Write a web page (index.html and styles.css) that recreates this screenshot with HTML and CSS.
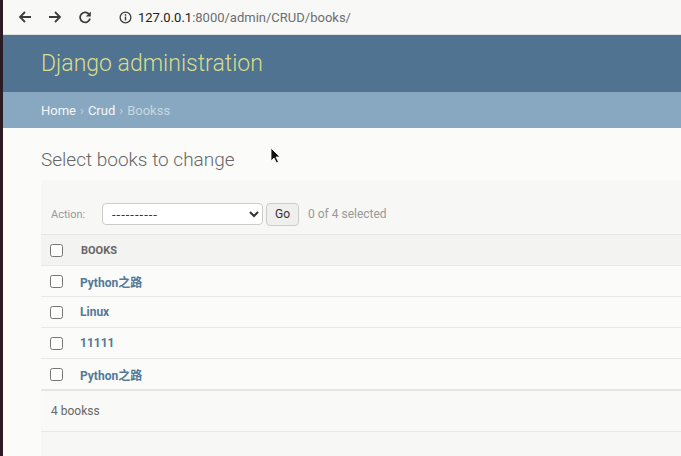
FILE: index.html
```html
<!DOCTYPE html>
<html>
    <head>
        <meta charset="utf-8">
        <title>Select books to change | Django site admin</title>
        <link rel="stylesheet" href="styles.css">
    </head>
    <body>
        <div class="desk"></div>
        <div class="window">
            <div class="toolbar">
                <svg class="nav" width="14" height="14" viewBox="0 0 14 14"><path d="M13 7H2M7 2L2 7l5 5" fill="none" stroke="#3c3c3c" stroke-width="1.8"/></svg>
                <svg class="nav" width="14" height="14" viewBox="0 0 14 14"><path d="M1 7h11M7 2l5 5-5 5" fill="none" stroke="#3c3c3c" stroke-width="1.8"/></svg>
                <svg class="nav" width="14" height="14" viewBox="0 0 14 14"><path d="M11.5 5A5 5 0 1 0 12 8.5" fill="none" stroke="#3c3c3c" stroke-width="1.8"/><path d="M12.8 1.5v5h-5z" fill="#3c3c3c"/></svg>
                <div class="url">
                    <svg width="13" height="13" viewBox="0 0 14 14"><circle cx="7" cy="7" r="5.8" fill="none" stroke="#3c3c3c" stroke-width="1.4"/><path d="M7 6v4.2" stroke="#3c3c3c" stroke-width="1.5"/><circle cx="7" cy="4.2" r="0.9" fill="#3c3c3c"/></svg>
                    <span class="host">127.0.0.1</span><span class="path">:8000/admin/CRUD/books/</span>
                </div>
            </div>
            <div class="header">Django administration</div>
            <div class="breadcrumbs"><a href="#">Home</a> <span class="sep">›</span> <a href="#">Crud</a> <span class="sep">›</span> <span class="sep">Bookss</span></div>
            <div class="content">
                <h1>Select books to change</h1>
                <div class="changelist">
                    <div class="actions">
                        <label>Action:</label>
                        <select><option>----------</option></select>
                        <button>Go</button>
                        <span class="counter">0 of 4 selected</span>
                    </div>
                    <div class="row head"><input type="checkbox"><span>BOOKS</span></div>
                    <div class="row"><input type="checkbox"><a href="#">Python之路</a></div>
                    <div class="row"><input type="checkbox"><a href="#">Linux</a></div>
                    <div class="row"><input type="checkbox"><a href="#">11111</a></div>
                    <div class="row"><input type="checkbox"><a href="#">Python之路</a></div>
                    <p class="paginator">4 bookss</p>
                </div>
            </div>
        </div>
        <svg class="cursor" width="12" height="18" viewBox="0 0 12 18"><path d="M1 1v13l3-3 2.5 5 2-1-2.5-5h4z" fill="#111" stroke="#fff" stroke-width="0.8"/></svg>
    </body>
</html>
```
FILE: styles.css
```css
html, body {
    margin: 0;
    height: 100%;
}
body {
    display: flex;
    font-family: Roboto, "Noto Sans CJK SC", sans-serif;
    background: #fbfbf9;
    overflow: hidden;
}
.desk {
    width: 3px;
    background: #2b1b24;
}
.window {
    flex: 1;
    display: flex;
    flex-direction: column;
}
.toolbar {
    height: 34px;
    border-bottom: 1px solid #e2e2e0;
    background: #f8f8f6;
    display: flex;
    align-items: center;
    padding-left: 15px;
    gap: 16px;
}
.nav {
    display: block;
}
.url {
    display: flex;
    align-items: center;
    gap: 6px;
    margin-left: 11px;
    font-size: 13px;
}
.host {
    color: #202124;
}
.path {
    color: #6b6e72;
    margin-left: -6px;
}
.header {
    height: 57px;
    background: #4f7390;
    color: #d8dc8c;
    font-size: 23px;
    font-weight: 300;
    padding-left: 38px;
    display: flex;
    align-items: center;
}
.breadcrumbs {
    height: 36px;
    background: #87a8c0;
    padding-left: 38px;
    display: flex;
    align-items: center;
    gap: 4px;
    font-size: 13px;
    color: #c9d9e5;
}
.breadcrumbs a {
    color: #f4f7fa;
    text-decoration: none;
}
.breadcrumbs .sep {
    color: #c6d7e3;
}
.content {
    flex: 1;
    padding-left: 38px;
    display: flex;
    flex-direction: column;
}
h1 {
    margin: 20px 0 9px;
    font-size: 19px;
    font-weight: 300;
    color: #666;
}
.changelist {
    flex: 1;
    background: #f7f7f5;
    font-size: 11px;
}
.actions {
    height: 40px;
    margin-top: 14px;
    padding-left: 10px;
    display: flex;
    align-items: center;
    color: #999;
}
.actions label {
    width: 51px;
}
select {
    width: 161px;
    height: 22px;
    border: 1px solid #ccc;
    border-radius: 4px;
    background: #fff;
    font-family: Roboto, sans-serif;
    font-size: 13px;
    letter-spacing: 1px;
    padding-left: 5px;
    color: #333;
}
button {
    margin-left: 3px;
    height: 23px;
    width: 33px;
    border: 1px solid #ccc;
    border-radius: 4px;
    background: #efefed;
    font-family: Roboto, sans-serif;
    font-size: 12px;
    color: #333;
}
.counter {
    margin-left: 9px;
    font-size: 12px;
}
.row {
    height: 30px;
    border-bottom: 1px solid #e8e8e6;
    display: flex;
    align-items: center;
    padding-left: 9px;
    background: #fbfbf9;
}
.row.head {
    background: #f3f3f1;
    border-top: 1px solid #e6e6e4;
    color: #666;
    font-weight: bold;
}
.row.head span {
    margin-left: 18px;
}
.row input {
    margin: 0;
    width: 13px;
    height: 13px;
}
.row a {
    margin-left: 17px;
    color: #53799a;
    font-weight: bold;
    font-size: 12px;
    text-decoration: none;
}
.paginator {
    margin: 0;
    height: 40px;
    padding-left: 10px;
    display: flex;
    align-items: center;
    border-top: 1px solid #e2e2e0;
    border-bottom: 1px solid #e8e8e6;
    background: #f9f9f7;
    color: #666;
    font-size: 12px;
}
.cursor {
    position: absolute;
    left: 270px;
    top: 147px;
}
```
